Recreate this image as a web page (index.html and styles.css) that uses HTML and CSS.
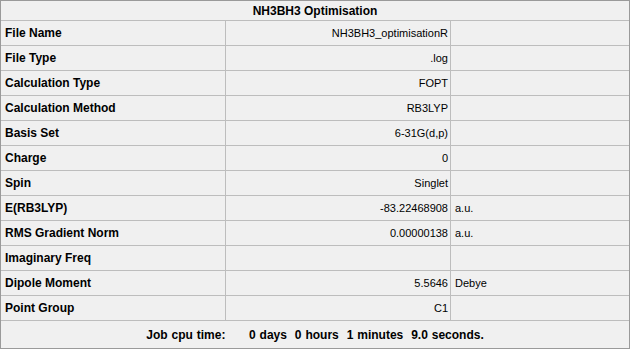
FILE: index.html
```html
<!DOCTYPE html>
<html>
<head>
<meta charset="utf-8">
<link rel="stylesheet" href="styles.css">
</head>
<body>
<div class="sheet">
  <div class="title">NH3BH3 Optimisation</div>

  <div class="label">File Name</div><div class="value">NH3BH3_optimisationR</div><div class="unit"></div>
  <div class="label">File Type</div><div class="value">.log</div><div class="unit"></div>
  <div class="label">Calculation Type</div><div class="value">FOPT</div><div class="unit"></div>
  <div class="label">Calculation Method</div><div class="value">RB3LYP</div><div class="unit"></div>
  <div class="label">Basis Set</div><div class="value">6-31G(d,p)</div><div class="unit"></div>
  <div class="label">Charge</div><div class="value">0</div><div class="unit"></div>
  <div class="label">Spin</div><div class="value">Singlet</div><div class="unit"></div>
  <div class="label">E(RB3LYP)</div><div class="value">-83.22468908</div><div class="unit">a.u.</div>
  <div class="label">RMS Gradient Norm</div><div class="value">0.00000138</div><div class="unit">a.u.</div>
  <div class="label">Imaginary Freq</div><div class="value"></div><div class="unit"></div>
  <div class="label">Dipole Moment</div><div class="value">5.5646</div><div class="unit">Debye</div>
  <div class="label">Point Group</div><div class="value">C1</div><div class="unit"></div>

  <div class="footer">Job cpu time:      0 days  0 hours  1 minutes  9.0 seconds.</div>
</div>
</body>
</html>
```
FILE: styles.css
```css
html, body {
  margin: 0;
  padding: 0;
  background: #f0f0f0;
}

.sheet {
  width: 628px;
  height: 347px;
  border: 1px solid #9a9a9a;
  display: grid;
  grid-template-columns: 224px 224px 178px;
  grid-template-rows: 19px repeat(12, 24px) 27px;
  gap: 1px;
  background: #bdbdbd;
  font-family: "Liberation Sans", Arial, sans-serif;
  font-size: 12px;
  color: #000;
}

.sheet > div {
  background: #f0f0f0;
  display: flex;
  align-items: center;
  white-space: pre;
  overflow: hidden;
}

.title {
  grid-column: 1 / 4;
  justify-content: center;
  font-weight: bold;
}

.label {
  font-weight: bold;
  padding-left: 4px;
}

.value {
  justify-content: flex-end;
  padding-right: 2px;
  font-size: 11px;
}

.unit {
  padding-left: 4px;
  font-size: 11px;
}

.footer {
  grid-column: 1 / 4;
  justify-content: center;
  font-weight: bold;
  word-spacing: 0.6px;
}
```
